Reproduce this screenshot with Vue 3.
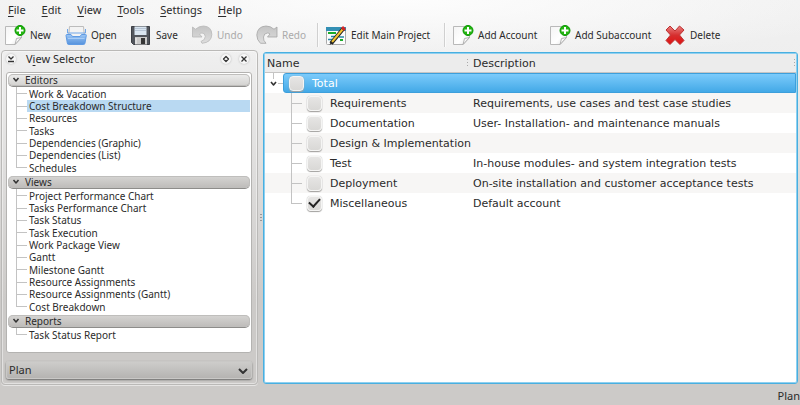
<script setup>
import { ref } from 'vue'

const menus = ['File', 'Edit', 'View', 'Tools', 'Settings', 'Help']

const tools = [
  { label: 'New', icon: 'new', size: 'w61' },
  { label: 'Open', icon: 'open', size: 'w65' },
  { label: 'Save', icon: 'save', size: 'w61' },
  { label: 'Undo', icon: 'undo', size: 'w65', disabled: true },
  { label: 'Redo', icon: 'redo', size: 'w61', disabled: true },
  { label: 'Edit Main Project', icon: 'edit', size: 'w119', separated: true },
  { label: 'Add Account', icon: 'new', size: 'w97', separated: true },
  { label: 'Add Subaccount', icon: 'new', size: 'w115' },
  { label: 'Delete', icon: 'delete', size: 'w61' },
]

const groups = [
  {
    name: 'Editors',
    items: ['Work & Vacation', 'Cost Breakdown Structure', 'Resources', 'Tasks', 'Dependencies (Graphic)', 'Dependencies (List)', 'Schedules'],
  },
  {
    name: 'Views',
    items: ['Project Performance Chart', 'Tasks Performance Chart', 'Task Status', 'Task Execution', 'Work Package View', 'Gantt', 'Milestone Gantt', 'Resource Assignments', 'Resource Assignments (Gantt)', 'Cost Breakdown'],
  },
  { name: 'Reports', items: ['Task Status Report'] },
]
const selected = ref('Cost Breakdown Structure')
const category = ref('Plan')

const totalChecked = ref(false)
const accounts = ref([
  { name: 'Requirements', description: 'Requirements, use cases and test case studies', checked: false },
  { name: 'Documentation', description: 'User- Installation- and maintenance manuals', checked: false },
  { name: 'Design & Implementation', description: '', checked: false },
  { name: 'Test', description: 'In-house modules- and system integration tests', checked: false },
  { name: 'Deployment', description: 'On-site installation and customer acceptance tests', checked: false },
  { name: 'Miscellaneous', description: 'Default account', checked: true },
])
</script>

<template>
  <div class="window">
    <svg class="defs" aria-hidden="true">
      <defs>
        <linearGradient id="paper" x1="0" y1="0" x2="1" y2="1">
          <stop offset="0" stop-color="#f4f4f4" /><stop offset=".6" stop-color="#fff" /><stop offset="1" stop-color="#ddd" />
        </linearGradient>
        <linearGradient id="folder" x1="0" y1="0" x2="0" y2="1">
          <stop offset="0" stop-color="#9cc6f5" /><stop offset="1" stop-color="#5592dc" />
        </linearGradient>
        <linearGradient id="cross" x1="0" y1="0" x2="0" y2="1">
          <stop offset="0" stop-color="#e88080" /><stop offset=".5" stop-color="#d62f2f" /><stop offset="1" stop-color="#e01010" />
        </linearGradient>
        <linearGradient id="arrow" x1="0" y1="0" x2="0" y2="1">
          <stop offset="0" stop-color="#c4c4c4" /><stop offset="1" stop-color="#dedede" />
        </linearGradient>
      </defs>
    </svg>

    <nav class="menubar">
      <a v-for="m in menus" :key="m" href="#"><u>{{ m[0] }}</u>{{ m.slice(1) }}</a>
    </nav>

    <div class="toolbar" role="toolbar">
      <template v-for="t in tools" :key="t.label">
        <span v-if="t.separated" class="separator"></span>
        <button type="button" :class="t.size" :disabled="t.disabled">
          <svg width="22" height="22" viewBox="0 0 22 22" aria-hidden="true">
            <g v-if="t.icon === 'new'">
              <path d="M1.5 2.5H17.500V13.500L11 20.500H1.500Z" fill="url(#paper)" stroke="#b9b9b9" />
              <path d="M11 20.500L12.500 14.500L17.500 13.500Z" fill="#f8f8f8" stroke="#a5a5a5" stroke-width=".8" />
              <circle cx="16" cy="6.500" r="5" fill="#23b50f" stroke="#079600" />
              <path d="M16 3V10M12.500 6.500H19.500" stroke="#fff" stroke-width="2" />
            </g>
            <g v-else-if="t.icon === 'open'">
              <path d="M4.500 2.500H18.500L19.500 13H3.500Z" fill="#f3f3f3" stroke="#bcbcbc" />
              <path d="M2.500 5V9H20.500V5" fill="none" stroke="#70a6e8" />
              <path d="M1 11.500Q1 10.500 2 10.500H6L7.500 12.500H15L16.500 10.500H20.500Q21.500 10.500 21.300 11.500L20 19Q19.800 20.500 18.500 20.500H3.500Q2.500 20.500 2.300 19Z" fill="url(#folder)" stroke="#5f9be4" />
              <path d="M3 14.500H19.500" stroke="#b3d4fa" stroke-width=".8" />
            </g>
            <g v-else-if="t.icon === 'save'">
              <path d="M1.500 2.500H19.500V20.500H3.500L1.500 18.500Z" fill="#51555c" stroke="#3c3f45" />
              <rect x="4.500" y="2.500" width="12" height="8.500" fill="#d9e5f0" />
              <path d="M5 4.500H16M5 6.500H16" stroke="#aebdce" stroke-width=".8" />
              <rect x="5" y="13" width="12" height="7.500" fill="#c9c9c9" />
              <rect x="11" y="14" width="4" height="6" fill="#353535" />
              <path d="M6 14V20" stroke="#f4f4f4" />
            </g>
            <path v-else-if="t.icon === 'undo'" d="M1.500 3L4.500 5.200Q8 2 12.500 2Q20.800 2.500 20.800 10.500Q20.500 18.500 11 19.300L10 17.500Q14.300 16 14.300 12.500Q14 9 11 9Q9.500 9 8.500 10L11 13H1.500Z" fill="url(#arrow)" stroke="#b8b8b8" stroke-width=".8" />
            <path v-else-if="t.icon === 'redo'" d="M21 3L18 5.200Q14.500 2 10 2Q1.300 2.500 .8 11Q.8 16 4.500 19.300H10Q7 16.500 7.500 13Q8 9 11.500 9Q13 9 14 10L11.500 13H21Z" fill="url(#arrow)" stroke="#a5a5a5" stroke-width=".8" />
            <g v-else-if="t.icon === 'edit'">
              <rect x="1.500" y="3.500" width="19" height="17" rx="1" fill="#fcfcfc" stroke="#aaa" />
              <rect x="1" y="3" width="20" height="4" fill="#338fb4" />
              <path d="M3 9H11M15 16H18" stroke="#19ab29" stroke-width="2" />
              <path d="M6 12.500H12M3 15.500H8M14 13H19" stroke="#2685a9" stroke-width="1.500" />
              <path d="M6 19.500L18 5" stroke="#222" stroke-width="4" />
              <path d="M7 18L17.500 5.500" stroke="#f3c431" stroke-width="2" />
              <path d="M17.500 5.500L19.500 3.500" stroke="#d62323" stroke-width="4" />
              <path d="M4.500 21L6 17.500L8 19Z" fill="#272727" />
            </g>
            <path v-else d="M2 6L6 2L11 7L15.500 2L20 6L15.500 11L20 16.500L16 20.500L11 15.500L6 20.500L2 16.500L6.500 11Z" fill="url(#cross)" stroke="#bd3030" />
          </svg>
          <span>{{ t.label }}</span>
        </button>
      </template>
    </div>

    <main class="content">
      <aside class="dock">
        <header class="dock-title">
          <button type="button" aria-label="Collapse">
            <svg width="10" height="10" viewBox="0 0 10 10"><path d="M2.500 2.500L5 5L7.500 2.500M2 7.500H8" /></svg>
          </button>
          <h2>V<u>i</u>ew Selector</h2>
          <button type="button" aria-label="Float">
            <svg width="10" height="10" viewBox="0 0 10 10"><path d="M5 2.500L7.500 5L5 7.500L2.500 5Z" /></svg>
          </button>
          <button type="button" aria-label="Close">
            <svg width="10" height="10" viewBox="0 0 10 10"><path d="M2.500 2.500L7.500 7.500M7.500 2.500L2.500 7.500" /></svg>
          </button>
        </header>

        <div class="tree">
          <section v-for="g in groups" :key="g.name">
            <button type="button" class="group">
              <svg width="8" height="6" viewBox="0 0 8 6" aria-hidden="true"><path d="M1.500 1L4 4L6.500 1" /></svg>
              {{ g.name }}
            </button>
            <ul>
              <li v-for="i in g.items" :key="i">
                <button type="button" :class="{ current: i === selected }" @click="selected = i">{{ i }}</button>
              </li>
            </ul>
          </section>
        </div>

        <div class="combo">
          <select v-model="category" aria-label="View category">
            <option>Plan</option>
          </select>
          <svg width="10" height="8" viewBox="0 0 10 8" aria-hidden="true"><path d="M1 2L5 6L9 2" /></svg>
        </div>
      </aside>

      <div class="splitter"><i></i></div>

      <div class="accounts">
        <table>
          <colgroup><col class="name-col" /><col /></colgroup>
          <thead>
            <tr><th>Name</th><th>Description</th></tr>
          </thead>
          <tbody>
            <tr class="total">
              <td colspan="2">
                <div class="total-row">
                  <svg class="expander" width="20" height="20" viewBox="0 0 20 20" aria-hidden="true">
                    <path class="line" d="M8.500 0V6M13 10.500H18" /><path class="mark" d="M6 9L8.500 12L11 9" />
                  </svg>
                  <label><input v-model="totalChecked" type="checkbox" /><span>Total</span></label>
                </div>
              </td>
            </tr>
            <tr v-for="a in accounts" :key="a.name">
              <td class="branch">
                <label><input v-model="a.checked" type="checkbox" /><span>{{ a.name }}</span></label>
              </td>
              <td>{{ a.description }}</td>
            </tr>
          </tbody>
        </table>
      </div>
    </main>

    <footer class="status">Plan</footer>
  </div>
</template>

<style>
body { margin: 0; }
</style>

<style scoped>
* { box-sizing: border-box; }
.window {
  min-height: 100vh;
  display: flex;
  flex-direction: column;
  background:
    radial-gradient(ellipse 60% 64px at 50% 0, #fdfdfd, transparent),
    linear-gradient(#f1f1f1, #eeeeee 60px, #cccac8 300px);
  font: 10px/12px "Noto Sans", sans-serif;
  color: #2b2b2b;
}
.defs { position: absolute; width: 0; height: 0; }
button { font: inherit; color: inherit; border: 0; padding: 0; background: none; text-align: left; }
svg path { stroke-linejoin: round; }

.menubar { display: flex; gap: 16px; padding: 2px 8px; font-size: 11px; line-height: 16px; }
.menubar a { color: inherit; text-decoration: none; }
u { text-underline-offset: 2px; }

.toolbar { display: flex; align-items: center; height: 30px; padding-left: 4px; }
.toolbar button { display: flex; flex: none; align-items: center; gap: 4px; height: 26px; white-space: nowrap; }
.toolbar svg { flex: none; }
.toolbar button:disabled { color: #aaa; }
.w61 { width: 61px; }
.w65 { width: 65px; }
.w97 { width: 97px; }
.w115 { width: 115px; }
.w119 { width: 119px; }
.separator { flex: none; width: 2px; height: 24px; margin: 0 6px 0 0; background: linear-gradient(90deg, #d0d0d0 1px, #fbfbfb 1px); }

.content { flex: 1; display: flex; padding: 0 2px 0 1px; }
.dock {
  flex: none;
  width: 257px;
  display: flex;
  flex-direction: column;
  padding: 0 5px 5px 4px;
  border: 1px solid #bab9b7;
  border-radius: 4px;
  box-shadow: inset 0 0 0 1px #ffffff70, 0 1px 0 #ffffff80;
}
.dock-title { display: flex; align-items: center; height: 16px; gap: 8px; padding-right: 3px; }
.dock-title h2 { flex: 1; margin: 0 0 0 2px; font-size: 11px; font-weight: 400; }
.dock-title svg { display: block; fill: none; stroke: #333; stroke-width: 1.3; }
.dock-title button { width: 10px; height: 10px; border-radius: 5px; background: #f7f7f7; box-shadow: 0 0 2px #b0b0b0; }

.tree {
  flex: 1;
  margin-top: 5px;
  padding: 1px;
  background: #fff;
  border: 1px solid #b4b3b1;
  border-radius: 3px;
}
.group {
  display: flex;
  align-items: center;
  gap: 5px;
  width: 100%;
  height: 12px;
  padding-left: 4px;
  border-radius: 5px;
  background: linear-gradient(#ededed, #d2d1cf);
  box-shadow: inset 0 0 0 1px #bfbebc, 0 1px 0 #8d8c8a;
}
section:nth-child(n + 2) .group { background: linear-gradient(#d6d5d3, #bdbbb9); }
.group svg, .combo svg { fill: none; stroke: #333; stroke-width: 1.500; }
ul { list-style: none; margin: 1px 0 2px; padding: 0 0 0 8px; }
li { display: flex; height: 12px; background: linear-gradient(#c3c3c3, #c3c3c3) 0 6px / 10px 1px no-repeat; border-left: 1px solid #c3c3c3; }
li:nth-child(3n + 1) { height: 13px; }
li:last-child { border-image: linear-gradient(#c3c3c3 7px, transparent 7px) 1; }
li button { flex: 1; margin-left: 10px; padding-left: 2px; line-height: 12px; }
li .current { background: #b9d9f2; }

.combo { display: flex; position: relative; margin-top: 8px; }
.combo select {
  appearance: none;
  flex: 1;
  height: 18px;
  padding: 0 3px;
  border: 0;
  border-radius: 3px;
  background: linear-gradient(#cfcecc, #b4b2b0);
  box-shadow: inset 0 0 0 1px #c9c8c6, 0 1px 2px #686766;
  font: inherit;
  font-size: 11px;
  color: inherit;
}
.combo svg { position: absolute; right: 4px; top: 6px; pointer-events: none; stroke-width: 2; }

.splitter { flex: none; width: 5px; display: flex; align-items: center; justify-content: center; }
.splitter i { width: 2px; height: 8px; background: repeating-linear-gradient(#999 0 1px, transparent 1px 3px); }

.accounts {
  flex: 1;
  min-width: 0;
  margin: 2px 0 1px;
  background: #fff;
  border: 1px solid #48afe0;
  border-radius: 3px;
  box-shadow: inset 0 0 0 1px #8fd0f0;
  padding: 1px;
  font-family: "DejaVu Sans", sans-serif;
  font-size: 11px;
}
table { width: 100%; table-layout: fixed; border-collapse: separate; border-spacing: 0; }
.name-col { width: 204px; }
th, td { padding: 2px 4px 0; text-align: left; font-weight: 400; white-space: nowrap; }
th {
  height: 19px;
  padding: 2px 2px 0;
  border-bottom: 1px solid #c6c5c4;
  background: repeating-linear-gradient(#aaa 0 1px, transparent 1px 3px) right 1px center / 1px 8px no-repeat, #ececec;
}
th:last-child { padding-left: 4px; }
td { height: 20px; }
tbody tr:nth-child(even) { background: #f7f6f5; }
.total td { padding: 0; }
.total-row { display: flex; height: 20px; }
.expander { flex: none; margin-right: -2px; fill: none; }
.line { stroke: #c3c3c3; }
.mark { stroke: #333; stroke-width: 1.600; }
.total label {
  flex: 1;
  padding-left: 5px;
  border: 1px solid #3d9fdb;
  border-radius: 3px 0 0 3px;
  background: linear-gradient(#7ccbfb, #43a9e7);
  color: #fff;
}
label { display: flex; align-items: center; gap: 8px; height: 20px; }
label span { padding-top: 2px; }
.branch {
  padding: 0 0 0 42px;
  background:
    linear-gradient(#c3c3c3, #c3c3c3) 26px 0 / 1px 100% no-repeat,
    linear-gradient(#c3c3c3, #c3c3c3) 26px 10px / 11px 1px no-repeat;
}
tr:last-child .branch { background-size: 1px 10px, 11px 1px; }
input {
  appearance: none;
  flex: none;
  display: grid;
  place-items: center;
  width: 15px;
  height: 15px;
  margin: 0;
  border: 1px solid #f5f5f4;
  border-radius: 4px;
  background: linear-gradient(#e6e5e4, #d9d8d6);
  box-shadow: 0 0 1px #a5a4a2, 0 1px 1px #a2a19f;
}
input:checked::before {
  content: "";
  width: 9px;
  height: 5px;
  margin-bottom: 3px;
  border: solid #242424;
  border-width: 0 0 2px 2px;
  transform: rotate(-48deg);
}

.status { height: 20px; padding-top: 5px; font-size: 11px; text-align: right; }
</style>
